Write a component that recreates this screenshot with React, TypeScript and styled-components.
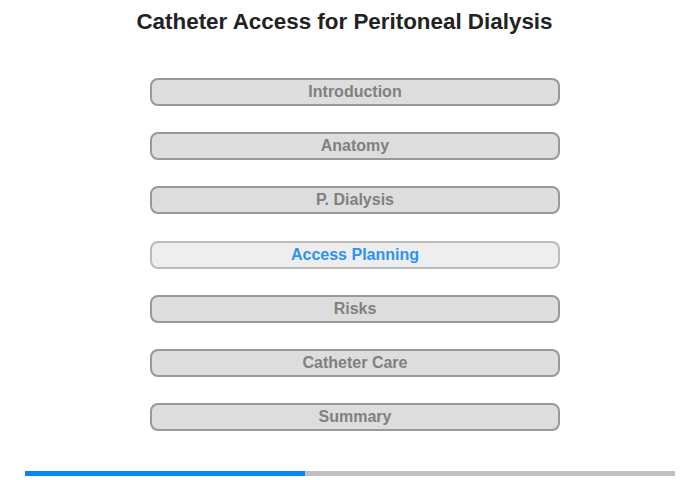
import React from 'react';
import styled, { createGlobalStyle } from 'styled-components';

const sections = [
  'Introduction',
  'Anatomy',
  'P. Dialysis',
  'Access Planning',
  'Risks',
  'Catheter Care',
  'Summary',
];

const current = 3;
const progress = 43;

const App: React.FC = () => {
  return (
    <>
      <GlobalStyle />
      <Page>
        <Title>Catheter Access for Peritoneal Dialysis</Title>
        <Menu>
          {sections.map((name, i) => (
            <MenuButton key={name} $active={i === current}>
              {name}
            </MenuButton>
          ))}
        </Menu>
        <ProgressTrack>
          <ProgressFill style={{ width: `${progress}%` }} />
        </ProgressTrack>
      </Page>
    </>
  );
};

export default App;

// ==================== Styled Components ====================
const GlobalStyle = createGlobalStyle`
  html, body {
    margin: 0;
    padding: 0;
    background: #fff;
    font-family: 'Liberation Sans', Arial, sans-serif;
  }
`;

const Page = styled.div`
  width: 700px;
  height: 480px;
  display: flex;
  flex-direction: column;
  align-items: center;
`;

const Title = styled.h1`
  margin: 10px 0 0;
  padding-right: 11px;
  font-size: 22.4px;
  line-height: 24px;
  font-weight: bold;
  color: #222;
`;

const Menu = styled.div`
  margin-top: 44px;
  margin-left: 10px;
  display: flex;
  flex-direction: column;
  gap: 26.2px;
`;

const MenuButton = styled.div<{ $active?: boolean }>`
  box-sizing: border-box;
  width: 410px;
  height: 28px;
  border-radius: 8px;
  border: 2px solid ${p => (p.$active ? '#bbb' : '#999')};
  background: ${p => (p.$active ? '#eee' : '#ddd')};
  color: ${p => (p.$active ? '#2a93f5' : '#808080')};
  font-size: 16px;
  font-weight: bold;
  display: flex;
  align-items: center;
  justify-content: center;
  cursor: pointer;
`;

const ProgressTrack = styled.div`
  margin-top: auto;
  margin-bottom: 4px;
  width: 650px;
  height: 5px;
  background: #c0c0c0;
`;

const ProgressFill = styled.div`
  height: 100%;
  background: #0a84f5;
`;
